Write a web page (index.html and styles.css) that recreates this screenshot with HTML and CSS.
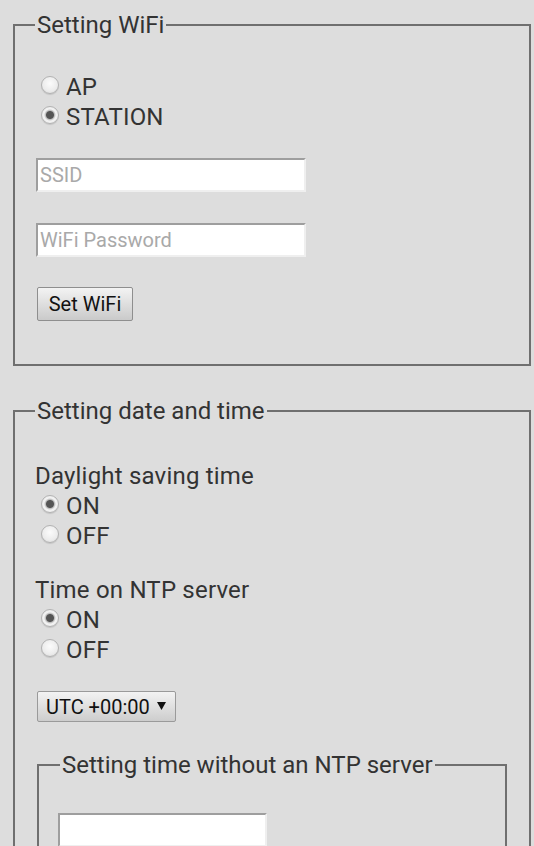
FILE: index.html
```html
<!DOCTYPE html>
<html lang="en">
<head>
<meta charset="utf-8">
<title>Settings</title>
<link rel="stylesheet" href="styles.css">
</head>
<body>
<form class="page">
  <fieldset class="group group-wifi">
    <legend class="group-title">Setting WiFi</legend>
    <div class="radios">
      <label class="radio-row"><input type="radio" name="mode" class="radio"><span>AP</span></label>
      <label class="radio-row"><input type="radio" name="mode" class="radio" checked><span>STATION</span></label>
    </div>
    <input class="field field-ssid" type="text" placeholder="SSID">
    <input class="field field-pass" type="text" placeholder="WiFi Password">
    <button type="button" class="btn">Set WiFi</button>
  </fieldset>

  <fieldset class="group group-time">
    <legend class="group-title">Setting date and time</legend>
    <div class="label">Daylight saving time</div>
    <div class="radios">
      <label class="radio-row"><input type="radio" name="dst" class="radio" checked><span>ON</span></label>
      <label class="radio-row"><input type="radio" name="dst" class="radio"><span>OFF</span></label>
    </div>
    <div class="label label-ntp">Time on NTP server</div>
    <div class="radios">
      <label class="radio-row"><input type="radio" name="ntp" class="radio" checked><span>ON</span></label>
      <label class="radio-row"><input type="radio" name="ntp" class="radio"><span>OFF</span></label>
    </div>
    <div class="select">
      <span class="select-value">UTC +00:00</span>
      <svg class="select-arrow" width="9" height="8" viewBox="0 0 9 8"><polygon points="0,0 9,0 4.5,8" fill="#111"/></svg>
    </div>

    <fieldset class="group group-inner">
      <legend class="group-title">Setting time without an NTP server</legend>
      <input class="field field-time" type="text">
    </fieldset>
  </fieldset>
</form>
</body>
</html>
```

FILE: styles.css
```css
html {
  background: #dddddd;
}

body {
  margin: 0;
  font-family: Roboto, "Liberation Sans", sans-serif;
  color: #333333;
  font-size: 24px;
  letter-spacing: 0.2px;
}

.page {
  margin: 0;
  padding: 11px 0 0 0;
}

.group {
  box-sizing: border-box;
  margin: 0 0 0 13px;
  width: 518px;
  min-width: 0;
  border: 2px solid #6f6f6f;
  padding: 0 0 43px 20px;
}

.group-title {
  font-size: 24px;
  line-height: 28px;
  letter-spacing: 0;
  padding: 0 2px;
  margin: 0;
  color: #333333;
}

.group-wifi {
  padding-top: 33px;
}

.group-time {
  margin-top: 31px;
  padding-top: 36px;
  padding-bottom: 60px;
}

.group-inner {
  margin: 29px 0 0 2px;
  width: 470px;
  padding: 34px 0 40px 19px;
}

.group-inner .group-title {
  margin-left: 2px;
}

.radios {
  display: flex;
  flex-direction: column;
}

.radio-row {
  display: flex;
  align-items: center;
  height: 30px;
  line-height: 30px;
  font-size: 24px;
  color: #333333;
}

.radio {
  appearance: none;
  -webkit-appearance: none;
  box-sizing: border-box;
  width: 18px;
  height: 18px;
  margin: 0 7px 4px 6px;
  border-radius: 50%;
  border: 1px solid #b2b2b2;
  background: radial-gradient(circle at 50% 40%, #fbfbfb 0, #ececec 60%, #d6d6d6 100%);
  box-shadow: 0 1px 1px rgba(0, 0, 0, 0.12);
}

.radio:checked {
  background: radial-gradient(circle at 50% 50%, #555555 0, #555555 3.5px, #bdbdbd 4.5px, #f3f3f3 6px, #e4e4e4 100%);
}

.label {
  height: 30px;
  line-height: 30px;
  font-size: 24px;
}

.label-ntp {
  margin-top: 24px;
}

.field {
  display: block;
  box-sizing: border-box;
  width: 270px;
  height: 34px;
  margin: 0 0 0 1px;
  padding: 0 2px;
  background: #ffffff;
  border-style: solid;
  border-width: 2px;
  border-color: #9e9e9e #efefef #efefef #9e9e9e;
  font-family: Roboto, "Liberation Sans", sans-serif;
  font-size: 20px;
  color: #222222;
  outline: none;
}

.field::placeholder {
  color: #a9a9a9;
}

.field-ssid {
  margin-top: 26px;
}

.field-pass {
  margin-top: 31px;
}

.field-time {
  width: 209px;
  margin: 0;
}

.btn {
  display: block;
  box-sizing: border-box;
  margin: 30px 0 0 2px;
  height: 34px;
  width: 96px;
  padding: 0;
  border: 1px solid #8e8e8e;
  border-radius: 2px;
  background: linear-gradient(#f3f3f3, #cacaca);
  font-family: Roboto, "Liberation Sans", sans-serif;
  font-size: 20px;
  color: #111111;
}

.select {
  display: flex;
  align-items: center;
  box-sizing: border-box;
  margin: 26px 0 0 2px;
  width: 139px;
  height: 31px;
  padding: 0 0 0 8px;
  border: 1px solid #9a9a9a;
  border-radius: 2px;
  background: linear-gradient(#f3f3f3, #cdcdcd);
  font-size: 20px;
  letter-spacing: 0;
  color: #111111;
}

.select-value {
  flex: 1;
}

.select-arrow {
  margin: 0 9px 1px 0;
}
```
